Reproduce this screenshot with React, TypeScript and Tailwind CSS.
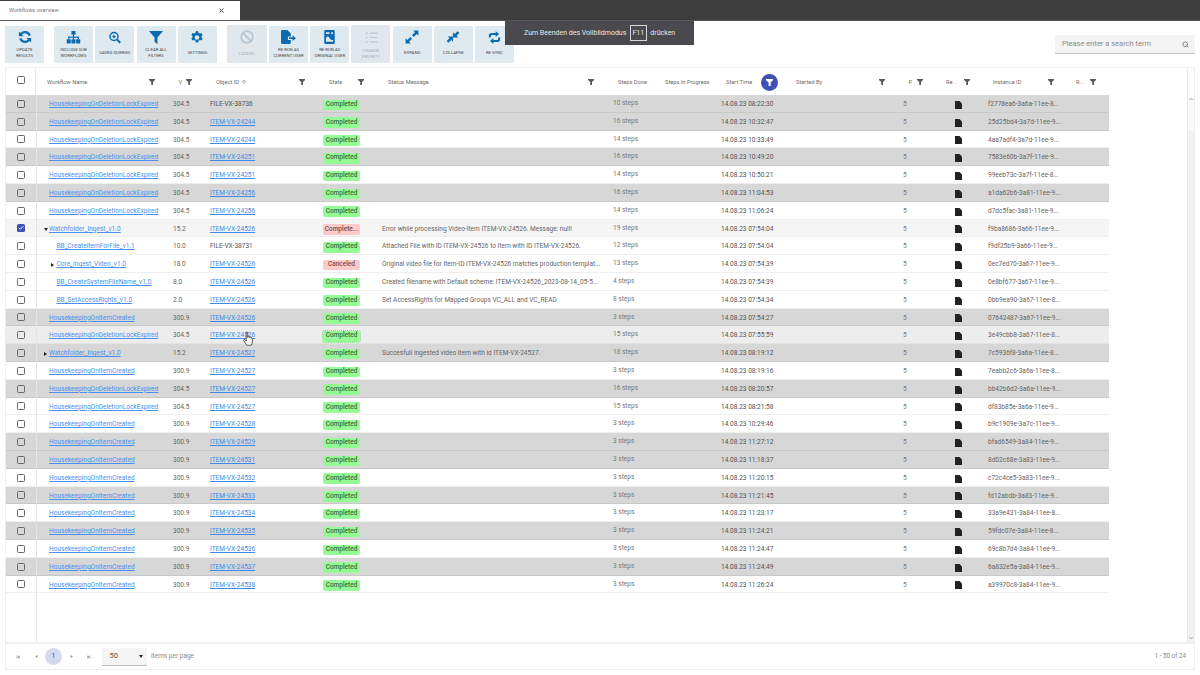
import React from "react";
import { Search, ChevronUp, ChevronDown, ArrowUp, Check, SkipBack, SkipForward, Play } from "lucide-react";

const BLUE = "#0b6cb0";

const icons: Record<string, React.ReactNode> = {
  refresh: (
    <svg width="14" height="14" viewBox="0 0 24 24" fill="none" stroke={BLUE} strokeWidth="3.800">
      <path d="M20 9.5A8.5 8.5 0 0 0 5.5 6.5L3 9" />
      <path d="M4 14.5A8.5 8.5 0 0 0 18.5 17.5L21 15" />
      <path d="M1.500 2.500V10.500H9.500Z" fill={BLUE} stroke="none" />
      <path d="M22.500 21.500V13.500H14.500Z" fill={BLUE} stroke="none" />
    </svg>
  ),
  tree: (
    <svg width="15" height="13" viewBox="0 0 24 22" fill={BLUE}>
      <rect x="8.5" y="0" width="7" height="6.5" rx="1" />
      <rect x="11" y="6" width="2" height="5" />
      <rect x="3" y="9.5" width="18" height="2" />
      <rect x="3" y="9.5" width="2" height="5" />
      <rect x="19" y="9.5" width="2" height="5" />
      <rect x="11" y="9.5" width="2" height="5" />
      <rect x="0.5" y="14" width="7" height="7" rx="1" />
      <rect x="8.5" y="14" width="7" height="7" rx="1" />
      <rect x="16.5" y="14" width="7" height="7" rx="1" />
    </svg>
  ),
  query: (
    <svg width="12" height="13" viewBox="0 0 24 24" fill="none" stroke={BLUE} strokeWidth="3">
      <circle cx="10" cy="10" r="8" />
      <path d="M16 16l6.5 6.5" strokeWidth="4" />
      <path d="M10 5.5l1.3 3 3 .3-2.2 2 .7 3-2.8-1.6-2.8 1.6.7-3-2.2-2 3-.3z" fill={BLUE} stroke="none" />
    </svg>
  ),
  filter: (
    <svg width="14" height="13" viewBox="0 0 24 22" fill={BLUE}><path d="M0 0h24L14.500 11v11l-5-3.500V11z" /></svg>
  ),
  gear: (
    <svg width="14" height="15" viewBox="0 0 24 24" fill={BLUE} fillRule="evenodd">
      <path d="M12 0.5l2.2 1.2.6 2.6 2.4 1 2.5-1 2 3.2-1.900 1.900v2.600l1.900 1.900-2 3.200-2.500-1-2.400 1-.6 2.600-2.200 1.200-2.200-1.200-.6-2.600-2.400-1-2.500 1-2-3.200 1.900-1.900V9.400L2.300 7.500l2-3.200 2.500 1 2.400-1 .6-2.600zM12 8a4 4 0 1 0 0 8 4 4 0 0 0 0-8z" />
    </svg>
  ),
  cancel: (
    <svg width="14" height="14" viewBox="0 0 24 24" fill="none" stroke="#b4c6d3" strokeWidth="3">
      <circle cx="12" cy="12" r="10" />
      <path d="M5 5l14 14" />
    </svg>
  ),
  fileArrow: (
    <svg width="15" height="14" viewBox="0 0 26 24" fill={BLUE}>
      <path d="M2 0h9l6 6v5h-5v6h5v5a2 2 0 0 1-2 2H2a2 2 0 0 1-2-2V2a2 2 0 0 1 2-2z" />
      <path d="M14 12.500h6V9l6 5-6 5v-3.500h-6z" />
    </svg>
  ),
  fileDoc: (
    <svg width="11" height="14" viewBox="0 0 18 24" fill={BLUE} fillRule="evenodd">
      <path d="M2 0h14a2 2 0 0 1 2 2v20a2 2 0 0 1-2 2H2a2 2 0 0 1-2-2V2a2 2 0 0 1 2-2zM3 4v3h6V4zM3 14c3-5 5-2 6 0s3 3 6 3v3H3zM12 4v3h3V4z" />
    </svg>
  ),
  priority: (
    <svg width="14" height="13" viewBox="0 0 24 24" fill="none" stroke="#b4c6d3" strokeWidth="2.200">
      <path d="M10 4h14M10 12h14M10 20h14" />
      <path d="M1 4l2 2 3-4M1 12l2 2 3-4M1 20l2 2 3-4" strokeWidth="1.800" />
    </svg>
  ),
  expand: (
    <svg width="14" height="14" viewBox="0 0 24 24" fill={BLUE}>
      <path d="M14 1h9v9l-3-3-5 5-3-3 5-5z" />
      <path d="M10 23H1v-9l3 3 5-5 3 3-5 5z" />
    </svg>
  ),
  collapse: (
    <svg width="14" height="14" viewBox="0 0 24 24" fill={BLUE}>
      <path d="M23 5l-5 5 3 3h-9V4l3 3 5-5z" />
      <path d="M1 19l5-5-3-3h9v9l-3-3-5 5z" />
    </svg>
  ),
  resync: (
    <svg width="15" height="13" viewBox="0 0 26 22" fill="none" stroke={BLUE} strokeWidth="3.500">
      <path d="M21 11v3a3 3 0 0 1-3 3H9" />
      <path d="M5 11V8a3 3 0 0 1 3-3h9" />
      <path d="M15 0l6 5-6 5z" fill={BLUE} stroke="none" />
      <path d="M11 12l-6 5 6 5z" fill={BLUE} stroke="none" />
    </svg>
  ),
};

type Btn = { icon: string; l: string[]; dis?: boolean };
const groupA: Btn[] = [{ icon: "refresh", l: ["UPDATE", "RESULTS"] }];
const groupB: Btn[] = [
  { icon: "tree", l: ["INCLUDE SUB", "WORKFLOWS"] },
  { icon: "query", l: ["SAVED QUERIES"] },
  { icon: "filter", l: ["CLEAR ALL", "FILTERS"] },
  { icon: "gear", l: ["SETTINGS"] },
];
const groupC: Btn[] = [
  { icon: "cancel", l: ["CANCEL"], dis: true },
  { icon: "fileArrow", l: ["RE RUN AS", "CURRENT USER"] },
  { icon: "fileDoc", l: ["RE RUN AS", "ORIGINAL USER"] },
  { icon: "priority", l: ["CHANGE", "PRIORITY"], dis: true },
  { icon: "expand", l: ["EXPAND"] },
  { icon: "collapse", l: ["COLLAPSE"] },
  { icon: "resync", l: ["RE-SYNC"] },
];

const ToolButton = ({ b, wide }: { b: Btn; wide?: boolean }) => (
  <div className={`${wide ? "w-[40px]" : "w-[39px]"} shrink-0 flex flex-col items-center rounded-[1px] ${b.dis ? "h-[38px] -mt-px bg-[#e1e7ec]" : "h-[36.500px] bg-[#dfe9f0]"}`}>
    <div className={`h-[20px] flex items-center justify-center ${b.dis ? "mt-[2px]" : "mt-px"}`}>{icons[b.icon]}</div>
    <div className={`flex-1 flex flex-col justify-center items-center pb-[3px] text-[4.300px] leading-[6px] whitespace-nowrap ${b.dis ? "text-[#a4afb7]" : "text-[#444]"}`}>
      {b.l.map((t) => <span key={t}>{t}</span>)}
    </div>
  </div>
);

const FUNNEL = "M0 0h12v2.200L8 6v6H4.500V6L0 2.200z";
const HFilter = () => (
  <svg width="6" height="6" viewBox="0 0 12 12" fill="#5a5a5a" className="shrink-0"><path d={FUNNEL} /></svg>
);

type Tone = "g" | "w" | "l" | "h";
type R = { n: string; ind: 0 | 1; arrow?: "d" | "r"; v: string; o: string; oPlain?: boolean; st?: string; m?: string; steps: string; t: string; id: string; tone: Tone; chk?: boolean; dash?: boolean };

const D = "HousekeepingOnDeletionLockExpired";
const C = "HousekeepingOnItemCreated";
const I = (n: number) => `ITEM-VX-${n}`;
const rows: R[] = [
  { n: D, ind: 0, v: "304.5", o: "FILE-VX-38736", oPlain: true, steps: "10 steps", t: "08:22:30", id: "f2778ea6-3a6a-11ee-8...", tone: "g" },
  { n: D, ind: 0, v: "304.5", o: I(24244), steps: "16 steps", t: "10:32:47", id: "25d25bd4-3a7d-11ee-9...", tone: "g" },
  { n: D, ind: 0, v: "304.5", o: I(24244), steps: "14 steps", t: "10:33:49", id: "4aa7adf4-3a7d-11ee-9...", tone: "w" },
  { n: D, ind: 0, v: "304.5", o: I(24251), steps: "16 steps", t: "10:49:20", id: "7583e60b-3a7f-11ee-9...", tone: "g" },
  { n: D, ind: 0, v: "304.5", o: I(24251), steps: "14 steps", t: "10:50:21", id: "99eeb73c-3a7f-11ee-8...", tone: "w" },
  { n: D, ind: 0, v: "304.5", o: I(24256), steps: "16 steps", t: "11:04:53", id: "a1da62b6-3a81-11ee-9...", tone: "g" },
  { n: D, ind: 0, v: "304.5", o: I(24256), steps: "14 steps", t: "11:06:24", id: "d7dc5fac-3a81-11ee-9...", tone: "w" },
  { n: "Watchfolder_Ingest_v1.0", ind: 0, arrow: "d", v: "15.2", o: I(24526), st: "Complete...", m: "Error while processing Video-Item ITEM-VX-24526. Message: null!", steps: "19 steps", t: "07:54:04", id: "f9ba8686-3a66-11ee-9...", tone: "l", chk: true },
  { n: "BB_CreateItemForFile_v1.1", ind: 1, v: "10.0", o: "FILE-VX-38731", oPlain: true, m: "Attached File with ID ITEM-VX-24526 to Item with ID ITEM-VX-24526.", steps: "12 steps", t: "07:54:04", id: "f9df25b9-3a66-11ee-9...", tone: "w" },
  { n: "Core_Ingest_Video_v1.0", ind: 1, arrow: "r", v: "18.0", o: I(24526), st: "Canceled", m: "Original video file for Item-ID ITEM-VX-24526 matches production templat...", steps: "13 steps", t: "07:54:39", id: "0ec7ed70-3a67-11ee-9...", tone: "w" },
  { n: "BB_CreateSystemFileName_v1.0", ind: 1, v: "8.0", o: I(24526), m: "Created filename with Default scheme: ITEM-VX-24526_2023-08-14_05-5...", steps: "4 steps", t: "07:54:39", id: "0e8bf677-3a67-11ee-9...", tone: "w" },
  { n: "BB_SetAccessRights_v1.0", ind: 1, v: "2.0", o: I(24526), m: "Set AccessRights for Mapped Groups VC_ALL and VC_READ", steps: "8 steps", t: "07:54:34", id: "0bb9ea90-3a67-11ee-8...", tone: "w" },
  { n: C, ind: 0, v: "300.9", o: I(24526), steps: "3 steps", t: "07:54:27", id: "07642487-3a67-11ee-9...", tone: "g" },
  { n: D, ind: 0, v: "304.5", o: I(24526), steps: "15 steps", t: "07:55:59", id: "3e49cbb8-3a67-11ee-8...", tone: "h", dash: true },
  { n: "Watchfolder_Ingest_v1.0", ind: 0, arrow: "r", v: "15.2", o: I(24527), m: "Succesfull ingested video Item with id ITEM-VX-24527.", steps: "18 steps", t: "08:19:12", id: "7c5936f8-3a6a-11ee-8...", tone: "g" },
  { n: C, ind: 0, v: "300.9", o: I(24527), steps: "3 steps", t: "08:19:16", id: "7eabb2c6-3a6a-11ee-8...", tone: "w" },
  { n: D, ind: 0, v: "304.5", o: I(24527), steps: "16 steps", t: "08:20:57", id: "bb42b6d2-3a6a-11ee-9...", tone: "g" },
  { n: D, ind: 0, v: "304.5", o: I(24527), steps: "15 steps", t: "08:21:58", id: "df83b85e-3a6a-11ee-9...", tone: "w" },
  { n: C, ind: 0, v: "300.9", o: I(24528), steps: "3 steps", t: "10:29:46", id: "b9c1909e-3a7c-11ee-9...", tone: "w" },
  { n: C, ind: 0, v: "300.9", o: I(24529), steps: "3 steps", t: "11:27:12", id: "bfad6549-3a84-11ee-9...", tone: "g" },
  { n: C, ind: 0, v: "300.9", o: I(24531), steps: "3 steps", t: "11:18:37", id: "8d02c68e-3a83-11ee-9...", tone: "g" },
  { n: C, ind: 0, v: "300.9", o: I(24532), steps: "3 steps", t: "11:20:15", id: "c72c4ce5-3a83-11ee-9...", tone: "w" },
  { n: C, ind: 0, v: "300.9", o: I(24533), steps: "3 steps", t: "11:21:45", id: "fd12abdb-3a83-11ee-9...", tone: "g" },
  { n: C, ind: 0, v: "300.9", o: I(24534), steps: "3 steps", t: "11:23:17", id: "33a9e431-3a84-11ee-8...", tone: "w" },
  { n: C, ind: 0, v: "300.9", o: I(24535), steps: "3 steps", t: "11:24:21", id: "59fdc07e-3a84-11ee-8...", tone: "g" },
  { n: C, ind: 0, v: "300.9", o: I(24536), steps: "3 steps", t: "11:24:47", id: "69c8b7d4-3a84-11ee-9...", tone: "w" },
  { n: C, ind: 0, v: "300.9", o: I(24537), steps: "3 steps", t: "11:24:49", id: "6a832e5a-3a84-11ee-9...", tone: "g" },
  { n: C, ind: 0, v: "300.9", o: I(24538), steps: "3 steps", t: "11:26:24", id: "a39970c8-3a84-11ee-9...", tone: "w" },
];

const toneCls: Record<Tone, string> = {
  g: "bg-[#d7d7d7] border-[#c8c8c8]",
  w: "bg-white border-[#efefef]",
  l: "bg-[#f5f5f5] border-[#ececec]",
  h: "bg-[#ededed] border-[#e4e4e4]",
};

const Badge = ({ s, dash }: { s?: string; dash?: boolean }) => {
  const t = s ?? "Completed";
  const red = !!s;
  return (
    <span className={`h-[10.500px] w-[37px] flex items-center justify-center rounded-[2px] text-[6.500px] font-medium whitespace-nowrap ${red ? "bg-[#fdc9c9] text-[#7a5050]" : "bg-[#95fb95] text-[#3f6b3f]"} ${dash ? "outline-1 outline-dotted outline-[#7fd97f]" : ""}`}>{t}</span>
  );
};

const Row = ({ r }: { r: R }) => (
  <div className={`h-[17.810px] shrink-0 flex items-center pt-[3px] border-b text-[6.550px] text-[#555] ${toneCls[r.tone]}`}>
    <div className="w-[30px] shrink-0 flex justify-center pb-[2px] pr-[1px]">
      {r.chk ? (
        <span className="w-[8px] h-[8px] rounded-[1.500px] bg-[#3f51b5] flex items-center justify-center"><Check size={6} color="white" strokeWidth={4} /></span>
      ) : (
        <span className="w-[8px] h-[8px] rounded-[1.500px] border border-[#666]" />
      )}
    </div>
    <div className={`w-[137px] shrink-0 flex items-center relative ${r.ind ? "pl-[20.500px]" : "pl-[13px]"}`}>
      {r.arrow && (
        <span className={`absolute flex ${r.ind ? "left-[15px]" : "left-[8px]"}`}>
          {r.arrow === "d" ? (
            <svg width="4" height="3" viewBox="0 0 4 3" fill="#222"><path d="M0 0h4L2 3z" /></svg>
          ) : (
            <svg width="3" height="4" viewBox="0 0 3 4" fill="#222"><path d="M0 0l3 2-3 2z" /></svg>
          )}
        </span>
      )}
      <a className="text-[#4a90f0] underline whitespace-nowrap">{r.n}</a>
    </div>
    <div className="w-[37px] shrink-0 text-[#666]">{r.v}</div>
    <div className="w-[113px] shrink-0">
      {r.oPlain ? <span className="text-[#555]">{r.o}</span> : <a className="text-[#3f8ae8] underline">{r.o}</a>}
    </div>
    <div className="w-[59px] shrink-0"><Badge s={r.st} dash={r.dash} /></div>
    <div className="w-[231px] shrink-0 whitespace-nowrap text-[#666]">{r.m}</div>
    <div className="w-[108px] shrink-0 text-[#777] pb-[2px]">{r.steps}</div>
    <div className="w-[182px] shrink-0 text-[#555]">14.08.23 {r.t}</div>
    <div className="w-[52px] shrink-0 text-[#777]">5</div>
    <div className="w-[33px] shrink-0 flex">
      <svg width="7" height="8" viewBox="0 0 7 8" fill="#222"><path d="M0 0h4.500L7 2.500V8H0z" /></svg>
    </div>
    <div className="flex-1 text-[#666] whitespace-nowrap">{r.id}</div>
  </div>
);

const HText = ({ children }: { children: React.ReactNode }) => (
  <span className="text-[5.700px] text-[#6b6b6b] whitespace-nowrap">{children}</span>
);

const Header = () => (
  <div className="h-[27px] shrink-0 flex items-center">
    <div className="w-[30px] shrink-0 h-full border-r border-[#e8e8e8] flex justify-center items-center pb-[3px]">
      <span className="w-[8px] h-[8px] rounded-[1.500px] border border-[#666]" />
    </div>
    <div className="flex-1 h-full pt-px flex items-center">
      <div className="w-[119px] shrink-0 flex items-center justify-between pl-[11px]"><HText>Workflow Name</HText><HFilter /></div>
      <div className="w-[37px] shrink-0 flex items-center justify-end gap-[4px]"><HText>V</HText><HFilter /></div>
      <div className="w-[113px] shrink-0 flex items-center pl-[24px]"><HText>Object ID</HText><ArrowUp size={6} color="#666" className="ml-[2px]" /><span className="flex-1" /><HFilter /></div>
      <div className="w-[59px] shrink-0 flex items-center justify-between pl-[24px]"><HText>State</HText><HFilter /></div>
      <div className="w-[230px] shrink-0 flex items-center justify-between pl-[24px]"><HText>Status Message</HText><HFilter /></div>
      <div className="w-[71px] shrink-0 pl-[24px] flex"><HText>Steps Done</HText></div>
      <div className="w-[61px] shrink-0 flex"><HText>Steps In Progress</HText></div>
      <div className="w-[70px] shrink-0 flex items-center gap-[9px]"><HText>Start Time</HText>
        <span className="w-[17px] h-[17px] rounded-full bg-[#3f51b5] flex items-center justify-center shrink-0">
          <svg width="7" height="7" viewBox="0 0 12 12" fill="white"><path d={FUNNEL} /></svg>
        </span>
      </div>
      <div className="w-[89px] shrink-0 flex items-center justify-between"><HText>Started By</HText><HFilter /></div>
      <div className="w-[38px] shrink-0 flex items-center justify-end gap-[5px]"><HText>P</HText><HFilter /></div>
      <div className="w-[47px] shrink-0 flex items-center justify-end gap-[7px]"><HText>Re...</HText><HFilter /></div>
      <div className="w-[84px] shrink-0 flex items-center justify-between pl-[23px]"><HText>Instance ID</HText><HFilter /></div>
      <div className="w-[42px] shrink-0 flex items-center justify-end gap-[6px]"><HText>R...</HText><HFilter /></div>
    </div>
  </div>
);

const PageBtn = ({ c }: { c: React.ReactNode }) => <span className="w-[18px] h-[18px] flex items-center justify-center text-[#999]">{c}</span>;

export default function App() {
  return (
    <div className="relative w-[1200px] h-[675px] overflow-hidden bg-white" style={{ fontFamily: "Roboto, 'Liberation Sans', sans-serif" }}>
      {/* browser strip */}
      <div className="h-[21px] bg-[#3d3d3d] border-b border-[#555] flex items-end">
        <div className="w-[240px] h-[19px] bg-white flex items-center justify-between pl-[9px] pr-[16px]">
          <span className="text-[5.600px] text-[#777]">Workflows overview</span>
          <svg width="5" height="5" viewBox="0 0 10 10" stroke="#444" strokeWidth="2"><path d="M1 1l8 8M9 1L1 9" /></svg>
        </div>
      </div>

      {/* toolbar */}
      <div className="h-[46px] flex items-start pt-[5px] pl-[5px]">
        {groupA.map((b) => <ToolButton key={b.icon} b={b} />)}
        <div className="flex gap-[2.300px] ml-[10px]">{groupB.map((b) => <ToolButton key={b.icon} b={b} />)}</div>
        <div className="flex gap-[2.200px] ml-[10px]">{groupC.map((b, i) => <ToolButton key={b.icon} b={b} wide={i === 0} />)}</div>
        <div className="ml-auto mr-[5px] mt-[9px] w-[140px] h-[19px] bg-[#f4f4f4] border-b border-[#c4c4c4] flex items-center justify-between pl-[7px] pr-[6px]">
          <span className="text-[7.500px] text-[#8b8b8b]">Please enter a search term</span>
          <Search size={7} color="#777" strokeWidth={3} />
        </div>
      </div>

      {/* grid */}
      <div className="mx-[5px] h-[603px] border border-[#eeeeee] flex flex-col">
        <div className="flex-1 min-h-0 flex relative">
          <div className="w-[1181px] shrink-0 flex flex-col">
            <Header />
            <div className="w-[1103px] flex flex-col">
              {rows.map((r, i) => <Row key={i} r={r} />)}
            </div>
          </div>
          <div className="absolute left-[30px] top-[27px] bottom-0 w-px bg-[#e4e4e4]" />
          <div className="flex-1 border-l border-[#e8e8e8] flex flex-col">
            <div className="h-[27px] shrink-0" />
            <div className="flex-1 bg-[#f1f1f1] flex flex-col items-center justify-between pb-[1px]">
              <div className="w-full h-[36px] bg-[#fafafa] flex justify-center items-start pt-[1px]"><ChevronUp size={6} color="#888" strokeWidth={3} /></div>
              <ChevronDown size={6} color="#888" strokeWidth={3} />
            </div>
          </div>
        </div>
        {/* pager */}
        <div className="h-[27px] shrink-0 border-t-[2px] border-[#efefef] flex items-center pl-[3px] pr-[8px]">
          <PageBtn c={<SkipBack size={4} fill="#999" strokeWidth={2} />} />
          <PageBtn c={<Play size={3} fill="#999" strokeWidth={2} className="rotate-180" />} />
          <span className="w-[17px] h-[17px] rounded-full bg-[#d3d9ef] text-[#3f51b5] flex items-center justify-center text-[7px]">1</span>
          <PageBtn c={<Play size={3} fill="#999" strokeWidth={2} />} />
          <PageBtn c={<SkipForward size={4} fill="#999" strokeWidth={2} />} />
          <div className="ml-[4px] w-[45px] h-[18px] bg-[#f5f5f5] border-b border-[#bdbdbd] flex items-center justify-between pl-[7.500px] pr-[4px]">
            <span className="text-[7.500px] text-[#555]">50</span>
            <svg width="4" height="3" viewBox="0 0 4 3" fill="#222"><path d="M0 0h4L2 3z" /></svg>
          </div>
          <span className="ml-[4px] text-[6.500px] text-[#8a8a8a]">items per page</span>
          <span className="ml-auto text-[6.300px] text-[#8a8a8a]">1 - 50 of 24</span>
        </div>
      </div>

      {/* browser fullscreen hint */}
      <div className="absolute left-[505px] top-[21px] w-[189px] h-[24px] bg-[#4a4a4e] flex items-center pl-[19px] text-[7px] text-[#e6e6e6]">
        <span>Zum Beenden des Vollbildmodus</span>
        <span className="mx-[3.500px] w-[17px] h-[16px] border border-[#d8d8d8] flex items-center justify-center">F11</span>
        <span>drücken</span>
      </div>

      {/* mouse cursor */}
      <svg className="absolute left-[243px] top-[331px]" width="11" height="16" viewBox="0 0 11 15" fill="white" stroke="#333" strokeWidth="0.8">
        <path d="M3.200 1.200c0-1 1.500-1 1.500 0V6l.2-.8c.2-.8 1.400-.8 1.500 0v1l.3-.5c.3-.6 1.300-.4 1.300.3v.8c.3-.5 1.300-.3 1.300.4v3.300c0 1.500-.4 2.300-1 3.200H3.800C3 12.500 1.800 11 .9 9.200c-.5-.9.400-1.600 1.100-.9l1.200 1.200z" />
      </svg>
    </div>
  );
}
